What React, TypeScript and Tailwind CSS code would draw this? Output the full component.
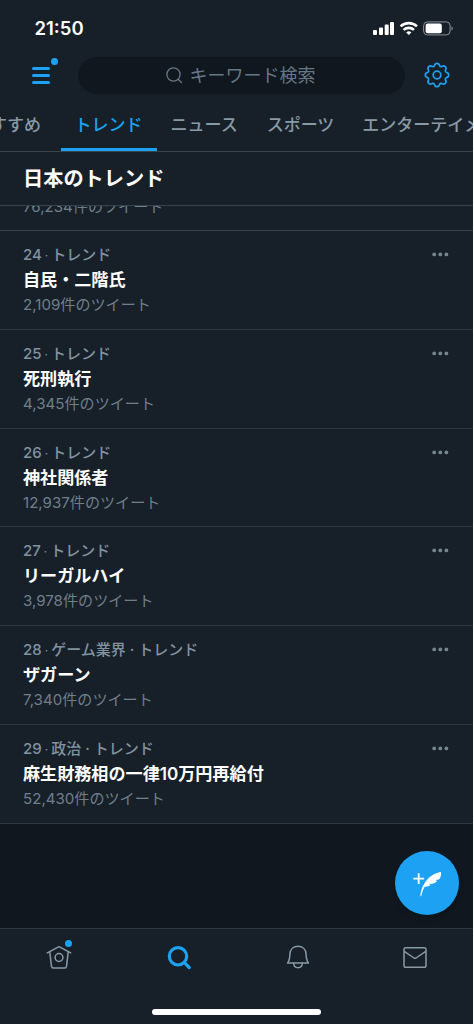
import React from 'react';

const trends = [
  { rank: 24, meta: 'トレンド', name: '自民・二階氏', count: '2,109' },
  { rank: 25, meta: 'トレンド', name: '死刑執行', count: '4,345' },
  { rank: 26, meta: 'トレンド', name: '神社関係者', count: '12,937' },
  { rank: 27, meta: 'トレンド', name: 'リーガルハイ', count: '3,978' },
  { rank: 28, meta: 'ゲーム業界 · トレンド', name: 'ザガーン', count: '7,340' },
  { rank: 29, meta: '政治 · トレンド', name: '麻生財務相の一律10万円再給付', count: '52,430' },
];

function StatusBar() {
  return (
    <div className="flex h-14 items-center justify-between pl-[34.5px] pr-[19px]">
      <span className="text-[18.5px] font-semibold leading-none text-white">21:50</span>
      <svg width="82" height="16" viewBox="0 0 82 16" fill="white">
        <rect x="1" y="10" width="4" height="5" rx="1" />
        <rect x="7" y="7.5" width="4" height="7.5" rx="1" />
        <rect x="12.7" y="4.5" width="4" height="10.5" rx="1" />
        <rect x="18" y="2" width="4" height="13" rx="1" />
        <g fill="none" stroke="white" strokeWidth="2.6">
          <path d="M28.6 6.4a12 12 0 0 1 16.4 0" />
          <path d="M31.6 9.9a7.6 7.6 0 0 1 10.4 0" />
        </g>
        <path d="M34.2 12.4a4 4 0 0 1 5.2 0L36.8 15z" />
        <rect x="51.6" y="1.9" width="26.5" height="13" rx="3.8" fill="none" stroke="#8b9095" strokeWidth="1" />
        <rect x="53.6" y="3.6" width="16.2" height="9.6" rx="2" />
        <path d="M79.5 6.2c1.7.7 1.7 3.6 0 4.3z" fill="#8b9095" />
      </svg>
    </div>
  );
}

function SearchHeader() {
  return (
    <div className="flex h-[38px] items-center">
      <div className="relative ml-8 flex w-[18px] flex-col gap-1">
        <span className="h-[3px] rounded-sm bg-[#1da1f2]" />
        <span className="h-[3px] rounded-sm bg-[#1da1f2]" />
        <span className="h-[3px] rounded-sm bg-[#1da1f2]" />
        <span className="absolute -top-[9px] left-[19px] size-[7px] rounded-full bg-[#1da1f2]" />
      </div>
      <div className="ml-7 flex h-[37px] w-[327px] items-center justify-center rounded-full bg-[#10171e] pr-[2px] text-[18px] text-[#657786]">
        <svg className="mr-[7px]" width="17" height="17" viewBox="0 0 17 17" fill="none" stroke="currentColor" strokeWidth="1.3" strokeLinecap="round">
          <circle cx="7.5" cy="7.5" r="6.6" />
          <path d="M12.2 12.2L15.5 15.5" />
        </svg>
        <span>キーワード検索</span>
      </div>
      <svg className="ml-[19px]" width="26" height="26" viewBox="0 0 26 26" fill="none" stroke="#1da1f2" strokeWidth="1.7" strokeLinejoin="round">
        <path d="M10.4 3.7Q10.9 1.3 13 1.3Q15.1 1.3 15.6 3.7Q16.4 4.9 17.7 4.6Q19.8 3.2 21.3 4.7Q22.8 6.2 21.4 8.3Q21.1 9.6 22.3 10.4Q24.7 10.9 24.7 13Q24.7 15.1 22.3 15.6Q21.1 16.4 21.4 17.7Q22.8 19.8 21.3 21.3Q19.8 22.8 17.7 21.4Q16.4 21.1 15.6 22.3Q15.1 24.7 13 24.7Q10.9 24.7 10.4 22.3Q9.6 21.1 8.3 21.4Q6.2 22.8 4.7 21.3Q3.2 19.8 4.6 17.7Q4.9 16.4 3.7 15.6Q1.3 15.1 1.3 13Q1.3 10.9 3.7 10.4Q4.9 9.6 4.6 8.3Q3.2 6.2 4.7 4.7Q6.2 3.2 8.3 4.6Q9.6 4.9 10.4 3.7Z" />
        <circle cx="13" cy="13" r="3.8" />
      </svg>
    </div>
  );
}

function Tabs() {
  return (
    <div className="flex h-[58px] overflow-hidden whitespace-nowrap border-b border-[#38444d] text-[17px] font-medium text-[#8899a6]">
      <div className="-ml-[44px] w-[105px] shrink-0 pt-[18px] text-right leading-[26px]">
        <span className="mr-5">おすすめ</span>
      </div>
      <div className="w-24 shrink-0 border-b-[3px] border-[#1da1f2] pr-px pt-[18px] text-center leading-[26px] text-[#1da1f2]">トレンド</div>
      <div className="ml-[13.5px] shrink-0 pt-[18px] leading-[26px]">ニュース</div>
      <div className="ml-[29px] shrink-0 pt-[18px] leading-[26px]">スポーツ</div>
      <div className="ml-[28px] shrink-0 pt-[18px] leading-[26px]">エンターテイメント</div>
    </div>
  );
}

interface TrendRowProps {
  rank: number;
  meta: string;
  name: string;
  count: string;
}

function TrendRow({ rank, meta, name, count }: TrendRowProps) {
  return (
    <div className="flex h-[98.83px] shrink-0 justify-between border-b border-[#2c3943] pl-[23px] pr-[24.5px] pt-[11px]">
      <div>
        <div className="text-[15px] font-medium leading-[25px] text-[#8192a0]">
          {rank}
          <span className="mx-[3px] text-[12px] font-normal">·</span>
          {meta}
        </div>
        <div className="-mt-px text-[17.1px] font-semibold leading-[26px] text-white">{name}</div>
        <div className="text-[15.1px] leading-[24px] text-[#6e7f8b]">{count}件のツイート</div>
      </div>
      <svg className="mt-[10px]" width="17" height="5" viewBox="0 0 17 5" fill="#74868f">
        <circle cx="2.2" cy="2.4" r="1.9" />
        <circle cx="8.3" cy="2.4" r="1.9" />
        <circle cx="14.4" cy="2.4" r="1.9" />
      </svg>
    </div>
  );
}

function BottomNav() {
  return (
    <nav className="h-24 shrink-0 border-t border-[#2c3943]">
      <div className="flex pt-[15px] text-[#8899a6]">
        <div className="flex w-[118.5px] justify-center">
          <div className="relative">
            <svg width="28" height="28" viewBox="0 0 28 28" fill="none" stroke="currentColor" strokeWidth="1.5" strokeLinecap="round" strokeLinejoin="round">
              <path d="M2.3 8.8L14 2.7l11.7 6.1M4.8 8L6.5 22.4q.2 1.6 1.8 1.6h11.4q1.6 0 1.8-1.6L23.2 8" />
              <circle cx="14" cy="13.5" r="3.9" />
            </svg>
            <span className="absolute -top-[4px] left-[20px] size-[7px] rounded-full bg-[#1da1f2]" />
          </div>
        </div>
        <div className="flex w-[120px] justify-center">
          <svg width="28" height="28" viewBox="0 0 28 28" fill="none" stroke="#1da1f2" strokeWidth="3.2" strokeLinecap="round">
            <circle cx="13" cy="12.3" r="8.7" />
            <path d="M19.6 18.9l4.6 4.6" />
          </svg>
        </div>
        <div className="flex w-[118px] justify-center">
          <svg width="28" height="28" viewBox="0 0 28 28" fill="none" stroke="currentColor" strokeWidth="1.5" strokeLinecap="round" strokeLinejoin="round">
            <path d="M3.5 18.9Q5.7 16.5 5.9 10.2C6.2 5 9.7 2.3 14 2.3s7.8 2.7 8.1 7.9Q22.3 16.5 24.5 18.9Z" />
            <path d="M9.6 19.2c.6 6 8.2 6 8.8 0" />
          </svg>
        </div>
        <div className="flex grow justify-center">
          <svg width="28" height="28" viewBox="0 0 28 28" fill="none" stroke="currentColor" strokeWidth="1.5" strokeLinejoin="round">
            <rect x="3" y="3.8" width="22" height="19.5" rx="1.8" />
            <path d="M3.2 7.4l9.8 6.6q1 .6 2 0l9.8-6.6" />
          </svg>
        </div>
      </div>
      <div className="mx-auto mt-[37px] h-1.5 w-[169px] rounded-full bg-white" />
    </nav>
  );
}

export default function App() {
  return (
    <div className="h-screen w-full bg-white">
      <div className="relative flex h-full w-[473px] flex-col overflow-hidden bg-[#172029] font-[Inter,'Noto_Sans_CJK_JP',sans-serif]">
        <StatusBar />
        <SearchHeader />
        <Tabs />
        <h1 className="h-[54px] shrink-0 border-b border-[#38444d] pl-[23px] text-[20.2px] font-bold leading-[54px] text-white">日本のトレンド</h1>
        {/* Row partly scrolled under the heading */}
        <div className="flex h-[25px] shrink-0 items-start overflow-hidden border-b border-[#38444d] pl-[23px]">
          <div className="-mt-[11.5px] text-[15.1px] leading-[24px] text-[#6e7f8b]">76,234件のツイート</div>
        </div>
        {trends.map((trend) => (
          <TrendRow key={trend.rank} {...trend} />
        ))}
        <div className="grow bg-[#10171e]" />
        <BottomNav />

        <button className="absolute bottom-[109px] right-[14px] flex size-16 items-center justify-center rounded-full bg-[#1da1f2] shadow-md">
          <svg width="32" height="32" viewBox="0 0 32 32" fill="white">
            <path d="M2.4 11.7h10.7M7.7 6.3v10.8" fill="none" stroke="white" strokeWidth="1.8" />
            <path d="M9.2 29.4C9.6 24.5 11.2 19.5 13.8 15.7C17.6 10 23.5 5.8 30 5C30.4 8 29.6 10.6 28 12.4L24.4 13.1L26.2 13.9C24.8 15.5 23 16.5 20.3 16.9L17.9 16.5L19.6 18C17.8 19.2 15.8 19.7 13.6 19.8C12 22.8 11 26 10.4 28.8Z" />
          </svg>
        </button>
      </div>
    </div>
  );
}
